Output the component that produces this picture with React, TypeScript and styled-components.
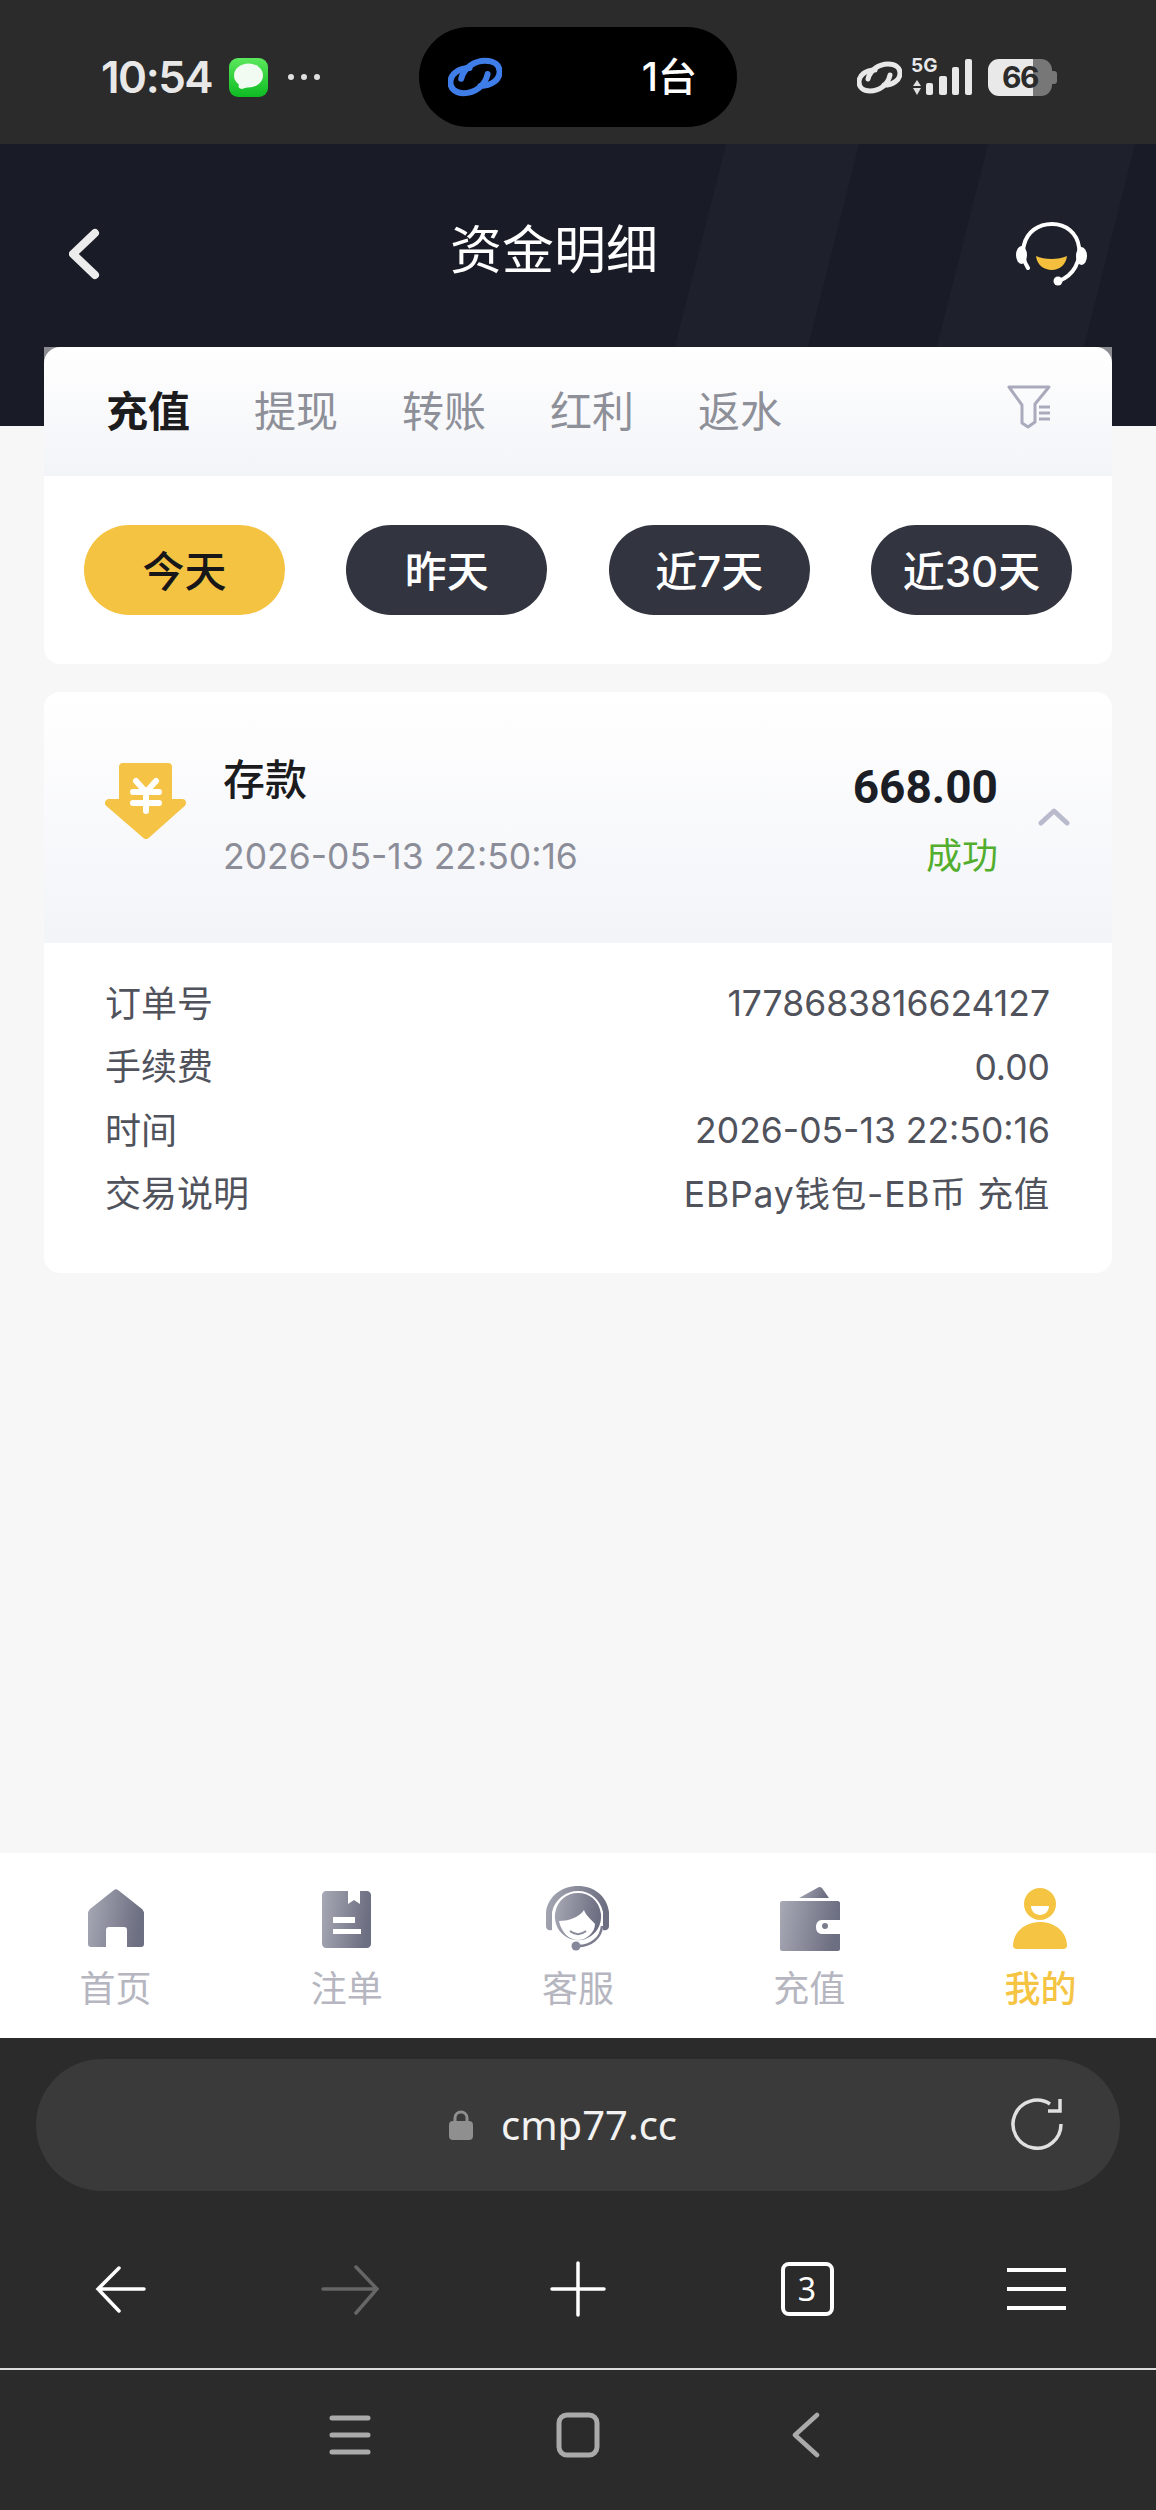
import React from "react";
import styled, { createGlobalStyle } from "styled-components";

const GlobalStyle = createGlobalStyle`
    html, body {
        margin: 0;
        padding: 0;
        background: #f7f7f7;
    }
    * {
        box-sizing: border-box;
    }
    svg {
        display: block;
        flex-shrink: 0;
    }
`;

const Page = styled.div`
    width: 1156px;
    height: 2510px;
    display: flex;
    flex-direction: column;
    background: #f7f7f7;
    font-family: Inter, "Noto Sans CJK SC", sans-serif;
`;

/* phone status bar */
const StatusBar = styled.div`
    height: 144px;
    flex-shrink: 0;
    display: grid;
    grid-template-columns: 419px 318px 1fr;
    align-items: center;
    padding-top: 10px;
    background: #2b2b2b;
`;

const StatusLeft = styled.div`
    display: flex;
    align-items: center;
    padding-left: 101px;
`;

const Clock = styled.span`
    width: 128px;
    font-size: 44px;
    font-weight: 600;
    letter-spacing: -1.5px;
    line-height: 1;
    color: #e8e8e8;
`;

const Dots = styled.div`
    display: flex;
    gap: 7px;
    margin-left: 20px;
`;

const Dot = styled.i`
    width: 6px;
    height: 6px;
    border-radius: 50%;
    background: #e0e0e0;
`;

const Island = styled.div`
    height: 100px;
    display: flex;
    align-items: center;
    justify-content: space-between;
    padding: 0 40px 0 29px;
    border-radius: 50px;
    background: #000;
`;

const IslandText = styled.span`
    font-size: 39px;
    font-weight: 500;
    line-height: 1.2;
    color: #fff;
`;

const StatusRight = styled.div`
    display: flex;
    align-items: center;
    padding-left: 120px;
`;

const SignalIcon = styled.svg`
    margin-left: 8px;
`;

const Battery = styled.div`
    position: relative;
    width: 64px;
    height: 37px;
    margin-left: 12px;
    display: flex;
    align-items: center;
    justify-content: center;
    border-radius: 11px;
    background: linear-gradient(90deg, #e9e9e9 70%, #777 70%);
    font-size: 30px;
    font-weight: 700;
    letter-spacing: -1.5px;
    color: #2b2b2b;

    &::after {
        content: "";
        position: absolute;
        right: -5px;
        top: 12px;
        width: 5px;
        height: 13px;
        border-radius: 0 3px 3px 0;
        background: #777;
    }
`;

/* dark page header */
const Header = styled.header`
    position: relative;
    height: 282px;
    flex-shrink: 0;
    padding: 77px 69px 0;
    background: #191c26;
`;

const HeaderStripes = styled.svg`
    position: absolute;
    left: 0;
    top: 0;
`;

const HeaderRow = styled.div`
    position: relative;
    display: flex;
    align-items: center;
    justify-content: space-between;
`;

const Title = styled.h1`
    margin: -6px 8px 0 0;
    font-size: 52px;
    font-weight: 400;
    line-height: 66px;
    color: #fff;
`;

const Content = styled.main`
    position: relative;
    flex: 1;
    margin-top: -79px;
    padding: 0 44px;
`;

const FilterCard = styled.section`
    border-radius: 0 0 16px 16px;
    background: linear-gradient(#8b8c92 16px, #fff 16px);
`;

const TabsHead = styled.div`
    height: 129px;
    display: flex;
    align-items: center;
    gap: 64px;
    padding: 0 61px 0 62px;
    border-radius: 16px 16px 0 0;
    background: linear-gradient(#fff, #f3f4f8);
`;

const Tab = styled.span<{ $active?: boolean }>`
    margin-top: 1px;
    font-size: 42px;
    font-weight: ${(props) => (props.$active ? 700 : 400)};
    line-height: 1.2;
    color: ${(props) => (props.$active ? "#1c1c1e" : "#8e9099")};
`;

const FilterIcon = styled.svg`
    margin: -10px 0 0 auto;
`;

const Pills = styled.div`
    display: flex;
    justify-content: space-between;
    padding: 49px 40px;
`;

const Pill = styled.div<{ $active?: boolean }>`
    width: 201px;
    height: 90px;
    display: flex;
    align-items: center;
    justify-content: center;
    padding-bottom: 4px;
    border-radius: 45px;
    font-size: 42px;
    font-weight: 500;
    color: ${(props) => (props.$active ? "#17171a" : "#fff")};
    background: ${(props) => (props.$active ? "#f5c342" : "#32343f")};
`;

const RecordCard = styled.section`
    margin-top: 28px;
    border-radius: 16px;
    overflow: hidden;
    background: #fff;
`;

const RecordHead = styled.div`
    height: 251px;
    display: flex;
    align-items: flex-start;
    padding: 63px 42px 0 61px;
    background: linear-gradient(#fff, #f3f4f8);
`;

const ArrowIcon = styled.svg`
    margin: 8px 37px 0 0;
`;

const RecordInfo = styled.div`
    flex: 1;
    display: flex;
    flex-direction: column;
    gap: 27px;
`;

const RecordName = styled.div`
    font-size: 42px;
    font-weight: 500;
    line-height: 50px;
    color: #1c1c1e;
`;

const RecordDate = styled.div`
    font-size: 35.5px;
    line-height: 50px;
    color: #8b8d99;
`;

const RecordResult = styled.div`
    display: flex;
    flex-direction: column;
    align-items: flex-end;
    gap: 19px;
    margin-top: 7px;
`;

const Amount = styled.div`
    font-family: Roboto, "Noto Sans", sans-serif;
    font-size: 46px;
    font-weight: 700;
    line-height: 50px;
    color: #1c1e26;
`;

const Status = styled.div`
    font-size: 36px;
    line-height: 50px;
    color: #52ae2c;
`;

const Chevron = styled.svg`
    margin: 53px 0 0 40px;
`;

const DetailList = styled.div`
    padding: 26px 62px 50px 61px;
`;

const DetailRow = styled.div`
    height: 63.5px;
    display: flex;
    align-items: center;
    justify-content: space-between;
    font-size: 36px;
    color: #50525c;
`;

const DetailValue = styled.span<{ $numeric?: boolean }>`
    margin-top: ${(props) => (props.$numeric ? "6px" : "0")};
    font-size: 35.5px;
    letter-spacing: ${(props) => (props.$numeric ? "0" : "0.8px")};
`;

/* bottom tab bar */
const TabBar = styled.nav`
    height: 185px;
    flex-shrink: 0;
    display: grid;
    grid-template-columns: repeat(5, 1fr);
    padding-top: 33px;
    background: #fff;
`;

const TabItem = styled.div<{ $active?: boolean }>`
    display: flex;
    flex-direction: column;
    align-items: center;
    gap: 12px;
    font-size: 36px;
    font-weight: ${(props) => (props.$active ? 500 : 400)};
    line-height: 50px;
    color: ${(props) => (props.$active ? "#f5c442" : "#b5b6c0")};
`;

/* browser chrome */
const Browser = styled.div`
    height: 472px;
    flex-shrink: 0;
    padding-top: 21px;
    background: #2b2b2b;
`;

const UrlBar = styled.div`
    position: relative;
    height: 132px;
    margin: 0 36px;
    display: flex;
    align-items: center;
    justify-content: center;
    gap: 28px;
    padding-right: 30px;
    border-radius: 66px;
    background: #3a3a3a;
`;

const UrlText = styled.span`
    font-family: "Noto Sans", sans-serif;
    font-size: 40px;
    line-height: 1.2;
    color: #f2f2f2;
`;

const RefreshIcon = styled.svg`
    position: absolute;
    right: 56px;
    top: 38px;
`;

const Toolbar = styled.div`
    height: 179px;
    display: grid;
    grid-template-columns: repeat(5, 229px);
    justify-content: center;
    justify-items: center;
    align-items: center;
    padding-top: 18px;
    border-bottom: 2px solid #dcdcdc;
`;

const TabCounter = styled.div`
    width: 53px;
    height: 54px;
    display: flex;
    align-items: center;
    justify-content: center;
    border: 4px solid #fff;
    border-radius: 8px;
    font-family: "Noto Sans", sans-serif;
    font-size: 32px;
    line-height: 1;
    color: #fff;
`;

const SystemNav = styled.div`
    height: 130px;
    display: grid;
    grid-template-columns: repeat(3, 228px);
    justify-content: center;
    justify-items: center;
    align-items: center;
`;

const ChainIcon = ({ color, width, height }: { color: string; width: number; height: number }) => (
    <svg width={width} height={height} viewBox="0 0 45 33" fill="none" stroke={color} strokeWidth="5" strokeLinecap="round">
        <path d="M11 18C13 9 22 3 31 3C39 3 43 7 43 12C43 19 36 24 27 24" />
        <path d="M33 14C31 24 22 30 13 30C6 30 2 26 2 21C2 14 9 9 18 9" />
    </svg>
);

const navGradient = (
    <defs>
        <linearGradient id="navFill" x1="0" y1="0" x2="1" y2="0.15">
            <stop offset="0" stopColor="#a7a9b5" />
            <stop offset="1" stopColor="#6c6e81" />
        </linearGradient>
    </defs>
);

const HomeIcon = () => (
    <svg width="66" height="66" viewBox="0 0 66 66">
        {navGradient}
        <path
            fill="url(#navFill)"
            d="M31 4C32 3 34 3 35 4L59 23C60 24 61 26 61 27V58C61 60 60 61 58 61H44V44C44 42 43 41 41 41H26C24 41 23 42 23 44V61H8C6 61 5 60 5 58V27C5 26 6 24 7 23Z"
        />
    </svg>
);

const BookIcon = () => (
    <svg width="66" height="66" viewBox="0 0 66 66">
        {navGradient}
        <path
            fill="url(#navFill)"
            d="M12 5H34V18L40 14L46 18V5H53C55 5 57 7 57 9V58C57 60 55 62 53 62H12C10 62 8 60 8 58V9C8 7 10 5 12 5Z"
        />
        <rect x="19" y="31" width="22" height="6" fill="#fff" />
        <rect x="19" y="43" width="28" height="5" fill="#fff" />
    </svg>
);

const AgentIcon = () => (
    <svg width="66" height="66" viewBox="0 0 66 66">
        {navGradient}
        <path
            fill="url(#navFill)"
            d="M1 26C3 10 17 0 33 0C49 0 62 10 64 26V40C64 44 60 45 58 44V26C55 13 45 5 33 5C21 5 10 13 7 26V44C3 45 1 43 1 40Z"
        />
        <path
            fill="url(#navFill)"
            d="M10 28C12 14 22 7 33 7C44 7 54 14 56 28C57 38 52 46 46 50C38 56 26 55 20 50C14 46 9 38 10 28Z"
        />
        <path fill="#fff" d="M14 35C22 35 34 32 39 24C41 30 47 34 50 38C50 46 42 54 33 54C24 54 16 46 14 35Z" />
        <path d="M25 45C30 49 36 49 41 45" fill="none" stroke="#8a8c9b" strokeWidth="2" />
        <path d="M57 40C56 52 46 60 33 60" fill="none" stroke="#7c7e8f" strokeWidth="2.5" />
        <circle cx="31" cy="60" r="4.5" fill="#85879a" />
    </svg>
);

const WalletIcon = () => (
    <svg width="66" height="66" viewBox="0 0 66 66">
        {navGradient}
        <path fill="url(#navFill)" d="M23 12L43 1C44 1 45 1 46 2L53 12Z" />
        <path
            fill="url(#navFill)"
            d="M6 15H62C63 15 64 16 64 17V34H46C42 34 40 37 40 41C40 45 42 48 46 48H64V63C64 64 63 65 62 65H6C5 65 4 64 4 63V17C4 16 5 15 6 15Z"
        />
        <circle cx="49" cy="40" r="3" fill="#7b7d8f" />
    </svg>
);

const UserIcon = () => (
    <svg width="66" height="66" viewBox="0 0 66 66">
        <ellipse cx="33" cy="18" rx="16" ry="16" fill="#f5c442" />
        <path d="M24 20H42C42 25 38 29 33 29C28 29 24 25 24 20Z" fill="#fff" />
        <path d="M6 60C6 46 18 36 33 36C48 36 60 46 60 60C60 62 58 63 56 63H10C8 63 6 62 6 60Z" fill="#f5c442" />
    </svg>
);

const periods = ["今天", "昨天", "近7天", "近30天"];
const tabs = ["充值", "提现", "转账", "红利", "返水"];
const details = [
    { label: "订单号", value: "1778683816624127", numeric: true },
    { label: "手续费", value: "0.00", numeric: true },
    { label: "时间", value: "2026-05-13 22:50:16", numeric: true },
    { label: "交易说明", value: "EBPay钱包-EB币 充值", numeric: false },
];
const navItems = [
    { label: "首页", icon: <HomeIcon /> },
    { label: "注单", icon: <BookIcon /> },
    { label: "客服", icon: <AgentIcon /> },
    { label: "充值", icon: <WalletIcon /> },
    { label: "我的", icon: <UserIcon />, active: true },
];

const App: React.FC = () => {
    return (
        <Page>
            <GlobalStyle />
            <StatusBar>
                <StatusLeft>
                    <Clock>10:54</Clock>
                    <svg width="39" height="39" viewBox="0 0 39 39">
                        <defs>
                            <linearGradient id="msgFill" x1="0" y1="0" x2="0" y2="1">
                                <stop offset="0" stopColor="#5be85c" />
                                <stop offset="1" stopColor="#0dbb22" />
                            </linearGradient>
                        </defs>
                        <rect width="39" height="39" rx="9" fill="url(#msgFill)" />
                        <ellipse cx="19.5" cy="17.5" rx="14.5" ry="12" fill="#f1fbf1" />
                        <path d="M10 25C10 28 8 30 13 31L19 29Z" fill="#f1fbf1" />
                    </svg>
                    <Dots>
                        <Dot />
                        <Dot />
                        <Dot />
                    </Dots>
                </StatusLeft>
                <Island>
                    <ChainIcon color="#3f7de8" width={54} height={40} />
                    <IslandText>1台</IslandText>
                </Island>
                <StatusRight>
                    <ChainIcon color="#e8e8e8" width={45} height={33} />
                    <SignalIcon width="66" height="38" viewBox="0 0 66 38">
                        <text x="1" y="14" fontFamily="Inter, sans-serif" fontSize="19" fontWeight="700" fill="#e8e8e8">
                            5G
                        </text>
                        <path d="M7 22L11 28H3ZM7 37L3 30H11Z" fill="#e0e0e0" />
                        <rect x="16" y="25" width="7" height="12" rx="2" fill="#e8e8e8" />
                        <rect x="29" y="18" width="8" height="19" rx="2" fill="#e8e8e8" />
                        <rect x="42" y="9" width="7" height="28" rx="2" fill="#e8e8e8" />
                        <rect x="55" y="1" width="7" height="36" rx="2" fill="#e8e8e8" />
                    </SignalIcon>
                    <Battery>66</Battery>
                </StatusRight>
            </StatusBar>

            <Header>
                <HeaderStripes width="1156" height="282" viewBox="0 0 1156 282">
                    <path d="M726 0H859L788 282H655Z" fill="#1e212b" />
                    <path d="M988 0H1135L1064 282H917Z" fill="#1e212b" />
                </HeaderStripes>
                <HeaderRow>
                    <svg width="31" height="52" viewBox="0 0 31 52" fill="none" stroke="#ececec" strokeWidth="8" strokeLinecap="round" strokeLinejoin="round">
                        <path d="M26 5L4 26L26 47" />
                    </svg>
                    <Title>资金明细</Title>
                    <svg width="71" height="66" viewBox="0 0 71 66">
                        <path
                            d="M12 47C7 40 6 30 8 24C11 11 22 3 36 3C50 3 61 12 63 26C65 40 58 54 43 60"
                            fill="none"
                            stroke="#fff"
                            strokeWidth="4"
                            strokeLinecap="round"
                        />
                        <ellipse cx="5.5" cy="34" rx="5.5" ry="9" fill="#fff" />
                        <ellipse cx="65.5" cy="35" rx="5.5" ry="9" fill="#fff" />
                        <circle cx="42" cy="60" r="4.5" fill="#fff" />
                        <path d="M20 35C28 39 43 39 51 35C50 44 43 49 36 49C28 49 21 44 20 35Z" fill="#f3bf3d" />
                    </svg>
                </HeaderRow>
            </Header>

            <Content>
                <FilterCard>
                    <TabsHead>
                        {tabs.map((tab, i) => (
                            <Tab key={tab} $active={i === 0}>
                                {tab}
                            </Tab>
                        ))}
                        <FilterIcon width="44" height="44" viewBox="0 0 44 44" fill="none" stroke="#a9abbd" strokeWidth="3" strokeLinejoin="round">
                            <path d="M2 2H42L28 19V37L21 42L15 38V20Z" />
                            <path d="M32 22H43M32 28H43M32 34H43" />
                        </FilterIcon>
                    </TabsHead>
                    <Pills>
                        {periods.map((period, i) => (
                            <Pill key={period} $active={i === 0}>
                                {period}
                            </Pill>
                        ))}
                    </Pills>
                </FilterCard>

                <RecordCard>
                    <RecordHead>
                        <ArrowIcon width="81" height="76" viewBox="0 0 81 76">
                            <path
                                d="M18 4H63V40H77L41 72L4 40H18Z"
                                fill="#f5c345"
                                stroke="#f5c345"
                                strokeWidth="8"
                                strokeLinejoin="round"
                            />
                            <path
                                d="M31 18L41 29L51 18M28 29H54M28 40H54M41 29V48"
                                fill="none"
                                stroke="#fff"
                                strokeWidth="6"
                                strokeLinecap="round"
                            />
                        </ArrowIcon>
                        <RecordInfo>
                            <RecordName>存款</RecordName>
                            <RecordDate>2026-05-13 22:50:16</RecordDate>
                        </RecordInfo>
                        <RecordResult>
                            <Amount>668.00</Amount>
                            <Status>成功</Status>
                        </RecordResult>
                        <Chevron width="32" height="18" viewBox="0 0 32 18" fill="none" stroke="#b9bbcc" strokeWidth="5" strokeLinecap="round" strokeLinejoin="round">
                            <path d="M3 15L16 3L29 15" />
                        </Chevron>
                    </RecordHead>
                    <DetailList>
                        {details.map((row) => (
                            <DetailRow key={row.label}>
                                <span>{row.label}</span>
                                <DetailValue $numeric={row.numeric}>{row.value}</DetailValue>
                            </DetailRow>
                        ))}
                    </DetailList>
                </RecordCard>
            </Content>

            <TabBar>
                {navItems.map((item) => (
                    <TabItem key={item.label} $active={item.active}>
                        {item.icon}
                        {item.label}
                    </TabItem>
                ))}
            </TabBar>

            <Browser>
                <UrlBar>
                    <svg width="24" height="30" viewBox="0 0 24 30">
                        <path d="M6 13V8C6 4 9 2 12 2C15 2 18 4 18 8V13" fill="none" stroke="#8f8f8f" strokeWidth="3" />
                        <rect x="0" y="11" width="24" height="19" rx="4" fill="#8f8f8f" />
                    </svg>
                    <UrlText>cmp77.cc</UrlText>
                    <RefreshIcon width="54" height="54" viewBox="0 0 54 54" fill="none" stroke="#e0e0e0" strokeWidth="3.5">
                        <path d="M40 7A24 24 0 1 0 51 27" />
                        <path d="M50 2V14H38" />
                    </RefreshIcon>
                </UrlBar>
                <Toolbar>
                    <svg width="60" height="60" viewBox="0 0 60 60" fill="none" stroke="#fff" strokeWidth="3.5" strokeLinecap="round">
                        <path d="M29 9L8 30L29 52M8 30H54" />
                    </svg>
                    <svg width="60" height="60" viewBox="0 0 60 60" fill="none" stroke="#666" strokeWidth="3.5" strokeLinecap="round">
                        <path d="M37 8L58 30L37 54M58 30H4" />
                    </svg>
                    <svg width="60" height="60" viewBox="0 0 60 60" fill="none" stroke="#fff" strokeWidth="3.5" strokeLinecap="round">
                        <path d="M4 30H56M30 4V56" />
                    </svg>
                    <TabCounter>3</TabCounter>
                    <svg width="60" height="44" viewBox="0 0 60 44" fill="none" stroke="#fff" strokeWidth="4">
                        <path d="M1 3H60M1 22H60M1 41H60" />
                    </svg>
                </Toolbar>
                <SystemNav>
                    <svg width="42" height="40" viewBox="0 0 42 40" fill="none" stroke="#aaa" strokeWidth="5" strokeLinecap="round">
                        <path d="M3 3H39M3 20H39M3 37H39" />
                    </svg>
                    <svg width="44" height="46" viewBox="0 0 44 46" fill="none" stroke="#aaa" strokeWidth="5">
                        <rect x="3" y="3" width="38" height="40" rx="8" />
                    </svg>
                    <svg width="28" height="46" viewBox="0 0 28 46" fill="none" stroke="#aaa" strokeWidth="4.5" strokeLinecap="round" strokeLinejoin="round">
                        <path d="M25 3L3 23L25 43" />
                    </svg>
                </SystemNav>
            </Browser>
        </Page>
    );
};

export default App;
